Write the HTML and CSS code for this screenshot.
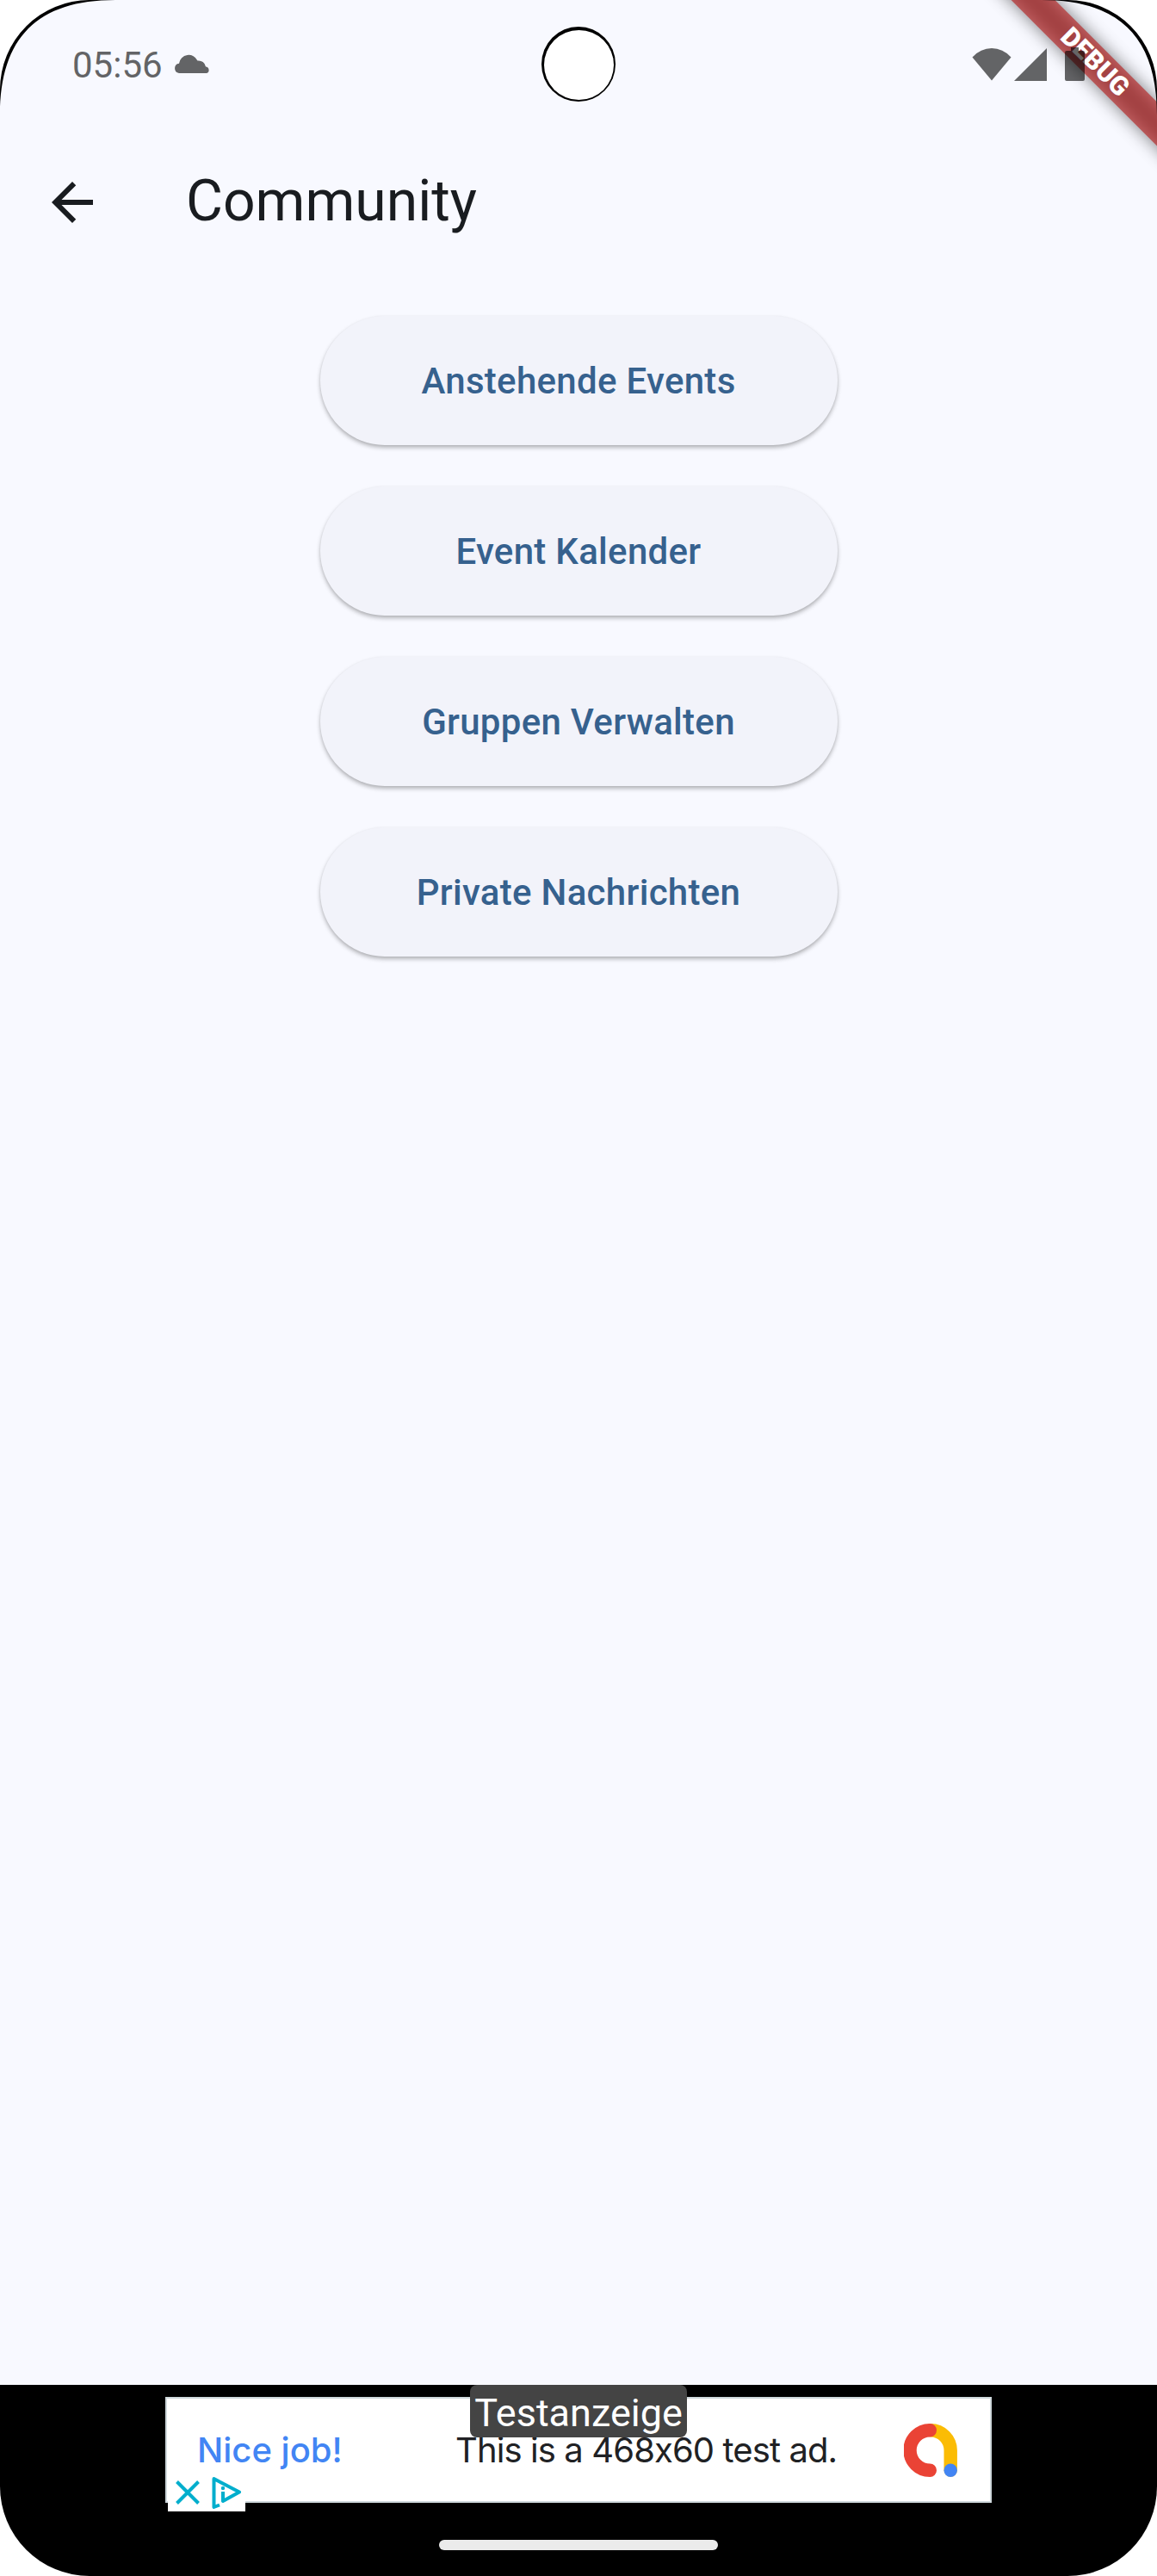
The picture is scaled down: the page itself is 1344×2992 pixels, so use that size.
FILE: index.html
```html
<!DOCTYPE html>
<html lang="de">
<head>
<meta charset="utf-8">
<meta name="viewport" content="width=device-width, initial-scale=1">
<title>Community</title>
<link rel="stylesheet" href="styles.css">
</head>
<body>
  <div class="phone">
    <header class="statusbar">
      <div class="clock">
        <span>05:56</span>
        <svg class="cloud" viewBox="0 0 42 24" width="42" height="24">
          <path d="M6 23a5.700 5.700 0 0 1 0-11.300A11.300 11.300 0 0 1 27.500 8.500 8.300 8.300 0 0 1 37 15.600 3.800 3.800 0 0 1 38 23z"/>
        </svg>
      </div>
      <div class="camera"><div class="lens"></div></div>
      <div class="system">
        <svg class="wifi" viewBox="0 0 46 40" width="46" height="40">
          <path d="M23 38.500L.5 11.500Q10 1 23 1t22.500 10.500z"/>
        </svg>
        <svg class="signal" viewBox="0 0 38 38" width="38" height="38">
          <path d="M38 0v38H0z"/>
        </svg>
        <svg class="battery" viewBox="0 0 23 39" width="23" height="39">
          <path d="M7 0h9v4h5a2 2 0 0 1 2 2v31a2 2 0 0 1-2 2H2a2 2 0 0 1-2-2V6a2 2 0 0 1 2-2h5z"/>
        </svg>
      </div>
    </header>

    <nav class="appbar">
      <svg class="back" viewBox="0 0 24 24" width="72" height="72">
        <path d="M20 11H7.830l5.590-5.590L12 4l-8 8 8 8 1.410-1.410L7.830 13H20z"/>
      </svg>
      <h1>Community</h1>
    </nav>

    <main class="menu">
      <button type="button">Anstehende Events</button>
      <button type="button">Event Kalender</button>
      <button type="button">Gruppen Verwalten</button>
      <button type="button">Private Nachrichten</button>
    </main>

    <footer class="bottom">
      <div class="ad">
        <span class="ad-title">Nice job!</span>
        <span class="ad-text">This is a 468x60 test ad.</span>
        <svg class="ad-logo" viewBox="0 0 62 62" width="62" height="62">
          <path d="M31 7.700A23.300 23.300 0 0 1 54.200 31v23" stroke="#fbbc04"/>
          <path d="M30.300 7.700a23.300 23.300 0 0 0 0 46.600" stroke="#ea4335"/>
          <circle cx="54.200" cy="54.200" r="7.700" fill="#4285f4"/>
        </svg>
        <div class="adchoices">
          <svg viewBox="0 0 28 28" width="28" height="28">
            <path d="M1.500 1.500l25 25M26.500 1.500l-25 25"/>
          </svg>
          <svg viewBox="0 0 36 38" width="36" height="38">
            <path d="M10 33.500l-6.500 2.500V3L33 18.500 14 29V18"/>
            <circle cx="14" cy="14" r="2.200"/>
          </svg>
        </div>
      </div>
      <span class="ad-label">Testanzeige</span>
      <div class="homebar"></div>
    </footer>

    <div class="debug">
      <div class="debug-shadow"></div>
      <div class="debug-band">DEBUG</div>
    </div>

    <!-- rounded display corners -->
    <svg class="corner left" viewBox="0 0 134 134" width="134" height="134">
      <path d="M0 0v134C0 43.600 43.600 0 134 0z"/>
      <path d="M0 0v104A104 104 0 0 1 104 0z" fill="#fff"/>
    </svg>
    <svg class="corner right" viewBox="0 0 134 134" width="134" height="134">
      <path d="M0 0v134C0 43.600 43.600 0 134 0z"/>
      <path d="M0 0v104A104 104 0 0 1 104 0z" fill="#fff"/>
    </svg>
  </div>
</body>
</html>
```
FILE: styles.css
```css
body {
  margin: 0;
  background-color: white;
  font-family: Roboto, "Liberation Sans", sans-serif;
}

svg {
  display: block;
}

.phone {
  position: relative;
  display: flex;
  flex-direction: column;
  width: 1344px;
  height: 2992px;
  overflow: hidden;
  background-color: #f8f9ff;
}

/* status bar */
.statusbar {
  display: grid;
  grid-template-columns: 1fr 86px 1fr;
  height: 151px;
  box-sizing: border-box;
  padding: 0 84px;
  color: #636466;
  font-size: 42px;
}

.clock {
  display: flex;
  height: 49px;
  line-height: 49px;
  margin-top: 51px;
}

.cloud {
  margin: 11px 0 0 13px;
  fill: #636466;
}

.camera {
  width: 86px;
  height: 87px;
  box-sizing: border-box;
  margin-top: 31px;
  padding-top: 4px;
  border-radius: 50%;
  background-color: black;
}

.lens {
  width: 81px;
  height: 81px;
  margin: 0 auto;
  border-radius: 50%;
  background-color: white;
}

.system {
  position: relative;
  z-index: 2;
  display: flex;
  justify-content: flex-end;
  padding-top: 55px;
  fill: rgba(0, 0, 0, 0.6);
}

.signal {
  margin: 1px 21px 0 3px;
}

/* app bar */
.appbar {
  display: flex;
  align-items: center;
  height: 168px;
  padding-left: 48px;
}

.back {
  fill: #191c20;
}

.appbar h1 {
  margin: 0 0 3px 96px;
  color: #191c20;
  font-size: 66px;
  font-weight: 400;
  line-height: 84px;
}

/* buttons */
.menu {
  flex: 1;
  display: flex;
  flex-direction: column;
  align-items: center;
  gap: 48px;
  padding-top: 48px;
}

.menu button {
  width: 601px;
  height: 150px;
  padding: 0;
  border: none;
  border-radius: 75px;
  background-color: #f2f3fa;
  color: #36618e;
  font-family: inherit;
  font-size: 42px;
  font-weight: 500;
  letter-spacing: 0.3px;
  box-shadow: 0 3px 5px rgba(0, 0, 0, 0.27), 0 1px 3px rgba(0, 0, 0, 0.05);
}

/* ad banner and navigation */
.bottom {
  position: relative;
  height: 222px;
  box-sizing: border-box;
  padding: 14px 192px 0;
  background-color: black;
  border-radius: 0 0 104px 104px;
  box-shadow: 0 110px 0 0 white;
}

.ad {
  position: relative;
  display: flex;
  align-items: center;
  height: 123px;
  box-sizing: border-box;
  border: 2px solid #cfd8dc;
  background-color: white;
  font-family: Inter, "Open Sans", sans-serif;
  font-size: 40px;
  font-feature-settings: "calt" 0;
  white-space: nowrap;
}

.ad-title {
  width: 300px;
  padding-left: 35px;
  color: #4285f4;
  font-weight: 500;
}

.ad-text {
  width: 521px;
  color: #202124;
  letter-spacing: -0.9px;
}

.ad-logo {
  fill: none;
  stroke-width: 15.4;
  stroke-linecap: round;
}

.adchoices {
  position: absolute;
  left: 1px;
  top: 87px;
  display: flex;
  align-items: center;
  gap: 13px;
  width: 81px;
  height: 44px;
  padding-left: 9px;
  background-color: white;
  fill: none;
  stroke: #00aecd;
  stroke-width: 4;
  stroke-linejoin: round;
}

.adchoices circle {
  fill: #00aecd;
  stroke: none;
}

.ad-label {
  position: absolute;
  top: 0;
  left: 546px;
  width: 252px;
  height: 61px;
  border-radius: 8px;
  background-color: #444;
  color: white;
  font-size: 45px;
  line-height: 65px;
  text-align: center;
}

.homebar {
  width: 324px;
  height: 12px;
  margin: 43px auto 0;
  border-radius: 6px;
  background-color: #ebebeb;
}

/* debug ribbon */
.debug {
  position: absolute;
  top: 54px;
  left: 1122px;
  width: 300px;
  height: 36px;
  transform: rotate(45deg);
}

.debug-shadow {
  position: absolute;
  inset: 0;
  background-color: rgba(0, 0, 0, 0.5);
  filter: blur(10px);
}

.debug-band {
  position: relative;
  height: 36px;
  background-color: rgba(183, 28, 28, 0.63);
  color: white;
  font-size: 30.6px;
  font-weight: 900;
  line-height: 36px;
  text-align: center;
}

.corner {
  position: absolute;
  top: 0;
}

.left {
  left: 0;
}

.right {
  right: 0;
  transform: scaleX(-1);
}
```
